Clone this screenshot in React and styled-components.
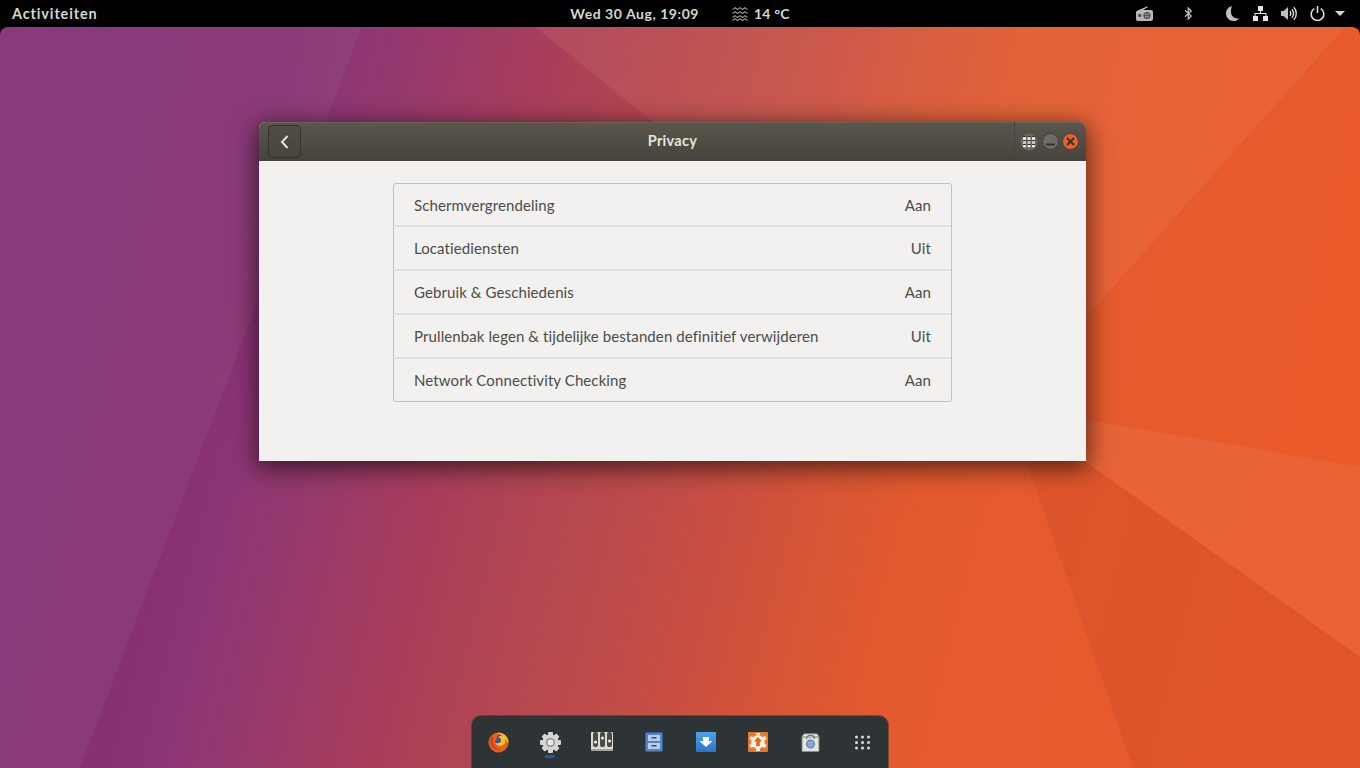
import styled, { createGlobalStyle } from 'styled-components';

const GlobalStyle = createGlobalStyle`
  html, body { margin: 0; padding: 0; height: 100%; background: #000; }
  #root { height: 100%; }
`;

const Screen = styled.div`
  width: 1360px;
  height: 768px;
  overflow: hidden;
  display: flex;
  flex-direction: column;
  background: #000;
  font-family: Lato, "Noto Sans", sans-serif;
`;

const TopBar = styled.header`
  height: 27px;
  flex: none;
  display: grid;
  grid-template-columns: 1fr auto 1fr;
  align-items: center;
  color: #d3d7cf;
  font-size: 14px;
  font-weight: 700;
  letter-spacing: 0.55px;
`;

const ActivitiesLabel = styled.span`
  margin-left: 12px;
  font-size: 14.5px;
  letter-spacing: 0.85px;
`;

const Clock = styled.div`
  display: flex;
  align-items: center;
`;

const Weather = styled.span`
  display: flex;
  align-items: center;
  gap: 6px;
  margin-left: 33px;
  letter-spacing: 0.2px;
`;

const Tray = styled.div`
  display: flex;
  align-items: center;
  justify-content: flex-end;
  padding-right: 15px;
`;

const TraySlot = styled.span`
  display: flex;
  margin-left: ${p => p.$gap}px;
`;

const Desktop = styled.main`
  position: relative;
  flex: 1;
  border-radius: 8px 8px 0 0;
  overflow: hidden;
`;

const Wallpaper = styled.svg`
  position: absolute;
  inset: 0;
  display: block;
`;

const Window = styled.section`
  position: absolute;
  left: 259px;
  top: 95px;
  width: 827px;
  height: 339px;
  display: flex;
  flex-direction: column;
  background: #f2f1ef;
  border-radius: 7px 7px 0 0;
  box-shadow: 0 5px 24px 2px rgba(0, 0, 0, 0.62);
`;

const HeaderBar = styled.div`
  height: 39px;
  flex: none;
  display: grid;
  grid-template-columns: 1fr auto 1fr;
  align-items: center;
  padding: 0 7px 0 9px;
  border-radius: 7px 7px 0 0;
  background: linear-gradient(#5b574c, #45433c);
  box-shadow: inset 0 1px 0 #66635a;
`;

const BackButton = styled.button`
  width: 33px;
  height: 33px;
  padding: 0;
  display: flex;
  align-items: center;
  justify-content: center;
  justify-self: start;
  background: linear-gradient(#504d45, #47453e);
  border: 1px solid #34332e;
  border-radius: 4px;
`;

const Title = styled.h1`
  margin: 0 0 2px -2px;
  color: #e6e4df;
  font-size: 14.5px;
  font-weight: 700;
  letter-spacing: 0.3px;
`;

const WindowControls = styled.div`
  display: flex;
  align-items: center;
  justify-content: flex-end;
  height: 39px;
`;

const Divider = styled.span`
  width: 1px;
  height: 39px;
  background: #45433c;
  margin-right: 5px;
`;

const ControlSlot = styled.span`
  display: flex;
  margin-left: ${p => p.$gap || 0}px;
`;

const WindowBody = styled.div`
  flex: 1;
  padding: 22px 134px 0;
`;

const SettingsList = styled.ul`
  margin: 0;
  padding: 0;
  list-style: none;
  border: 1px solid #c4c2bd;
  border-radius: 3px;
`;

const SettingRow = styled.li`
  height: 42px;
  display: flex;
  align-items: center;
  justify-content: space-between;
  padding: 0 20px;
  color: #4c4c49;
  font-size: 15px;
  letter-spacing: 0.1px;
  & + & {
    border-top: 2px solid #e2e0dc;
  }
  &:first-child {
    height: 41px;
  }
`;

const Dock = styled.nav`
  position: absolute;
  left: 472px;
  bottom: 0;
  width: 416px;
  height: 52px;
  box-sizing: border-box;
  display: flex;
  align-items: flex-start;
  padding-top: 16px;
  background: #2e3336;
  border-radius: 9px 9px 0 0;
  box-shadow: 0 0 0 1px rgba(60, 50, 50, 0.55);
`;

const DockItem = styled.div`
  position: relative;
  width: 52px;
  height: 20px;
  flex: none;
  display: flex;
  align-items: center;
  justify-content: center;
  &::after {
    content: '';
    display: ${p => (p.$running ? 'block' : 'none')};
    position: absolute;
    left: 21px;
    top: 23px;
    width: 10px;
    height: 3px;
    background: #245a9c;
  }
`;

const WallpaperArt = () => (
  <Wallpaper width="1360" height="741" viewBox="0 27 1360 741">
    <defs>
      <linearGradient id="base" x1="0" y1="600" x2="1280" y2="920" gradientUnits="userSpaceOnUse">
        <stop offset="0" stopColor="#86307a" />
        <stop offset="0.11" stopColor="#883073" />
        <stop offset="0.147" stopColor="#8c3575" />
        <stop offset="0.22" stopColor="#983a6a" />
        <stop offset="0.294" stopColor="#a83d5c" />
        <stop offset="0.368" stopColor="#b04552" />
        <stop offset="0.441" stopColor="#bb4a4b" />
        <stop offset="0.515" stopColor="#c94f42" />
        <stop offset="0.588" stopColor="#d75535" />
        <stop offset="0.662" stopColor="#e25a2e" />
        <stop offset="0.735" stopColor="#e65a2e" />
        <stop offset="1" stopColor="#ec5a28" />
      </linearGradient>
    </defs>
    <rect x="0" y="27" width="1360" height="741" fill="url(#base)" />
    <polygon points="0,27 362,27 80,768 0,768" fill="#9a6a8a" opacity="0.18" />
    <polygon points="535,27 1345,27 1007,406" fill="#f0a080" opacity="0.13" />
    <polygon points="1007,406 1360,467 1360,657" fill="#e8805a" opacity="0.25" />
    <polygon points="1007,406 1360,657 1360,768 1133,768" fill="#c84a28" opacity="0.3" />
  </Wallpaper>
);

const RadioIcon = () => (
  <svg width="17" height="15" viewBox="0 0 17 15">
    <path d="M1.500 4.500 11.500.3l.4.9L7 4h8a2 2 0 0 1 2 2v7a2 2 0 0 1-2 2H2a2 2 0 0 1-2-2V6.500a2 2 0 0 1 1.500-2z" fill="#b8b8b8" />
    <circle cx="11" cy="9.500" r="3.600" fill="#505050" />
    <g fill="#c8c8c8">
      <circle cx="9.800" cy="8.300" r=".7" />
      <circle cx="12.200" cy="8.300" r=".7" />
      <circle cx="9.800" cy="10.700" r=".7" />
      <circle cx="12.200" cy="10.700" r=".7" />
    </g>
    <circle cx="3.800" cy="9.500" r="1.700" fill="#505050" />
  </svg>
);

const BluetoothIcon = () => (
  <svg width="9" height="15" viewBox="0 0 9 15">
    <path d="M1 4.200 7.200 10 4.300 13V2l2.900 3L1 10.800" fill="none" stroke="#bebebe" strokeWidth="1.300" />
  </svg>
);

const MoonIcon = () => (
  <svg width="13" height="15" viewBox="0 0 13 15">
    <path d="M6 0C2.500.8 0 3.900 0 7.500 0 11.600 3.300 15 7.500 15c2.300 0 4.300-1 5.500-2.600-.5.100-1 .1-1.500.1C7.900 12.500 5 9.600 5 6 5 3.700 5.200 1.600 6 0z" fill="#bebebe" />
  </svg>
);

const NetworkIcon = () => (
  <svg width="15" height="15" viewBox="0 0 15 15" fill="#e6e6e6">
    <rect x="5" y="0" width="5" height="5" />
    <rect x="0" y="10" width="5" height="5" />
    <rect x="10" y="10" width="5" height="5" />
    <path d="M7 5h1v2h5.500v3h-1V8h-10v2h-1V7H7z" />
  </svg>
);

const VolumeIcon = () => (
  <svg width="16" height="15" viewBox="0 0 16 15">
    <path d="M0 5h2.500L7 1v13l-4.500-4H0z" fill="#bebebe" />
    <path d="M8.800 5.200a3.200 3.200 0 0 1 0 4.600M10.700 3.200a6 6 0 0 1 0 8.600M12.700 1.300a8.700 8.700 0 0 1 0 12.400" fill="none" stroke="#dcdcdc" strokeWidth="1.400" />
  </svg>
);

const PowerIcon = () => (
  <svg width="15" height="15" viewBox="0 0 15 15" fill="none" stroke="#e6e6e6" strokeWidth="1.500">
    <path d="M4.300 2.700a6.300 6.300 0 1 0 6.400 0" />
    <path d="M7.500 0v7" />
  </svg>
);

const CaretIcon = () => (
  <svg width="10" height="5" viewBox="0 0 10 5">
    <path d="M0 0h10L5 5z" fill="#d6d6d6" />
  </svg>
);

const WeatherIcon = () => (
  <svg width="16" height="14" viewBox="0 0 16 14" fill="none" stroke="#8f8f8c" strokeWidth="1.200">
    <path d="M.5 2.500 3 .8l2.500 1.700L8 .8l2.500 1.700L13 .8l2.500 1.700" />
    <path d="M.5 6.500 3 4.800l2.500 1.700L8 4.800l2.500 1.700L13 4.800l2.500 1.700" />
    <path d="M.5 10.500 3 8.800l2.500 1.700L8 8.800l2.500 1.700L13 8.800l2.500 1.700" />
    <path d="M.5 13.500 3 11.800l2.500 1.700L8 11.800l2.500 1.700L13 11.800l2.500 1.700" />
  </svg>
);

const BackChevron = () => (
  <svg width="9" height="14" viewBox="0 0 9 14">
    <path d="M7.500 1 2 7l5.500 6" fill="none" stroke="#e4e2de" strokeWidth="2" />
  </svg>
);

const TweakButton = () => (
  <svg width="18" height="18" viewBox="0 0 18 18">
    <circle cx="9" cy="9" r="8.500" fill="#6a6860" />
    {[3, 7.500, 12].map(x => (
      <g key={x}>
        <rect x={x} y="3" width="3" height="12" fill="#34332e" />
        <rect x={x} y="4" width="3" height="3" fill="#e6e6e2" />
        <rect x={x} y="8" width="3" height="3" fill="#c8c8c4" />
        <rect x={x} y="12" width="3" height="2.500" fill="#e6e6e2" />
      </g>
    ))}
  </svg>
);

const MinimizeButton = () => (
  <svg width="17" height="17" viewBox="0 0 17 17">
    <circle cx="8.500" cy="8.500" r="8" fill="#6f6d66" stroke="#3f3d37" />
    <rect x="4" y="10.500" width="9" height="2" fill="#34332e" />
  </svg>
);

const CloseButton = () => (
  <svg width="17" height="17" viewBox="0 0 17 17">
    <circle cx="8.500" cy="8.500" r="8" fill="#ed5f30" stroke="#3f3d37" />
    <path d="M5 5l7 7M12 5l-7 7" stroke="#3c3526" strokeWidth="2.200" />
  </svg>
);

const FirefoxIcon = () => (
  <svg width="21" height="21" viewBox="0 0 22 22">
    <circle cx="11" cy="11" r="10.500" fill="#e8601a" />
    <path d="M21.500 11A10.500 10.500 0 0 0 7 1.500c3-.5 6 .5 8 3-2-1-3.500-.5-4.500 1 2 .5 3.500 2 3 4-1 2.500-4 3-6 1.500 1 3 4.500 4.500 7.500 3 3-1.500 4-4 3-7 1.500 1.500 2 3 2.500 4.500z" fill="#f5c020" />
    <path d="M15 4.500c-2-1-3.500-.5-4.500 1 2 .5 3.500 2 3 4-1 2.500-4 3-6 1.500-.5-2 .5-3 2-3.500-1-1.500-.5-3 1-4 1.500-1 3.500-.5 4.500 1z" fill="#2a5aa8" />
    <path d="M3 6c-1.500 3-1 7 1.500 10 3 3 7.500 3.500 11 1.500-4 1-8-.5-9.500-4-1-2.500-1-5 0-7L5 3.500z" fill="#d8401a" />
  </svg>
);

const GearIcon = () => (
  <svg width="21" height="21" viewBox="0 0 21 21">
    <g fill="#d6d6d4">
      <circle cx="10.500" cy="10.500" r="8" />
      {[0, 45, 90, 135, 180, 225, 270, 315].map(a => (
        <rect key={a} x="8" y="0" width="5" height="4" rx="1" transform={`rotate(${a} 10.500 10.500)`} />
      ))}
    </g>
    <circle cx="10.500" cy="10.500" r="4.500" fill="#8e8e8c" />
    <circle cx="10.500" cy="10.500" r="3" fill="#ecebe9" />
  </svg>
);

const TweakToolIcon = () => (
  <svg width="22" height="20" viewBox="0 0 22 20">
    <rect x="0" y="0" width="22" height="19" rx="1" fill="#dcdcd6" />
    <rect x="0" y="17" width="22" height="2" fill="#a4a49e" />
    {[[2, 10], [9, 6], [16, 9]].map(([x, y]) => (
      <g key={x}>
        <rect x={x} y="0" width="5" height="15" rx="2" fill="#4a4a48" />
        <circle cx={x + 2.500} cy={y} r="1.600" fill="#ecece8" />
      </g>
    ))}
  </svg>
);

const FilesIcon = () => (
  <svg width="18" height="20" viewBox="0 0 18 20">
    <rect x="0.500" y="0.500" width="17" height="19" rx="1.500" fill="#4f86c8" stroke="#2f5f9e" />
    <rect x="3" y="3" width="12" height="6" fill="#b9cde4" />
    <rect x="3" y="11" width="12" height="6" fill="#b9cde4" />
    <rect x="6.500" y="5" width="5" height="1.500" fill="#2f4f78" />
    <rect x="6.500" y="13" width="5" height="1.500" fill="#2f4f78" />
  </svg>
);

const DownloadsIcon = () => (
  <svg width="20" height="20" viewBox="0 0 20 20">
    <defs>
      <linearGradient id="dl" x1="0" y1="0" x2="0" y2="1">
        <stop offset="0" stopColor="#4aa4ec" />
        <stop offset="1" stopColor="#2a74cc" />
      </linearGradient>
    </defs>
    <rect width="20" height="20" rx="1" fill="url(#dl)" />
    <path d="M7 5h6v4h3.500L10 15 3.500 9H7z" fill="#fff" />
  </svg>
);

const UpdatesIcon = () => (
  <svg width="20" height="20" viewBox="0 0 20 20">
    <rect width="20" height="20" rx="1" fill="#e8792c" />
    <g fill="#fbeee2">
      <circle cx="10" cy="10" r="6.800" />
      {[0, 60, 120, 180, 240, 300].map(a => (
        <rect key={a} x="8.200" y="1" width="3.600" height="4" transform={`rotate(${a} 10 10)`} />
      ))}
    </g>
    <path d="M10 5l4 4.500h-2.200V14H8.200V9.500H6z" fill="#e0691e" />
  </svg>
);

const StoreIcon = () => (
  <svg width="19" height="19" viewBox="0 0 19 19">
    <path d="M1 3.500 3 .8h13l2 2.700v14.200a1 1 0 0 1-1 1H2a1 1 0 0 1-1-1z" fill="#e4e4e0" stroke="#82847e" />
    <path d="M1 4h17" stroke="#82847e" />
    <path d="M5.500 6c0-5 8-5 8 0" fill="none" stroke="#6c6e68" strokeWidth="1.200" />
    <circle cx="9.500" cy="11" r="4.700" fill="#6f95cc" />
    <g fill="#e6ecf5">
      <circle cx="8.200" cy="9.800" r=".7" />
      <circle cx="10.800" cy="9.800" r=".7" />
      <circle cx="8.200" cy="12.300" r=".7" />
      <circle cx="10.800" cy="12.300" r=".7" />
    </g>
  </svg>
);

const AppGridIcon = () => (
  <svg width="15" height="15" viewBox="0 0 15 15" fill="#d8dcdc">
    {[1.500, 7.500, 13.500].flatMap(x =>
      [2, 7.500, 13].map(y => <circle key={`${x}-${y}`} cx={x} cy={y} r="1.500" />)
    )}
  </svg>
);

const settings = [
  ['Schermvergrendeling', 'Aan'],
  ['Locatiediensten', 'Uit'],
  ['Gebruik & Geschiedenis', 'Aan'],
  ['Prullenbak legen & tijdelijke bestanden definitief verwijderen', 'Uit'],
  ['Network Connectivity Checking', 'Aan'],
];

const dockApps = [
  { id: 'firefox', Icon: FirefoxIcon },
  { id: 'settings', Icon: GearIcon, running: true },
  { id: 'tweaks', Icon: TweakToolIcon },
  { id: 'files', Icon: FilesIcon },
  { id: 'downloads', Icon: DownloadsIcon },
  { id: 'updates', Icon: UpdatesIcon },
  { id: 'store', Icon: StoreIcon },
  { id: 'grid', Icon: AppGridIcon },
];

const trayIcons = [
  { id: 'radio', Icon: RadioIcon, gap: 0 },
  { id: 'bluetooth', Icon: BluetoothIcon, gap: 31 },
  { id: 'moon', Icon: MoonIcon, gap: 33 },
  { id: 'network', Icon: NetworkIcon, gap: 14 },
  { id: 'volume', Icon: VolumeIcon, gap: 13 },
  { id: 'power', Icon: PowerIcon, gap: 13 },
  { id: 'caret', Icon: CaretIcon, gap: 10 },
];

function App() {
  return (
    <Screen>
      <GlobalStyle />
      <TopBar>
        <ActivitiesLabel>Activiteiten</ActivitiesLabel>
        <Clock>
          <span>Wed 30 Aug, 19:09</span>
          <Weather>
            <WeatherIcon />
            14 °C
          </Weather>
        </Clock>
        <Tray>
          {trayIcons.map(({ id, Icon, gap }) => (
            <TraySlot key={id} $gap={gap}>
              <Icon />
            </TraySlot>
          ))}
        </Tray>
      </TopBar>
      <Desktop>
        <WallpaperArt />
        <Window>
          <HeaderBar>
            <BackButton aria-label="Terug">
              <BackChevron />
            </BackButton>
            <Title>Privacy</Title>
            <WindowControls>
              <Divider />
              <ControlSlot><TweakButton /></ControlSlot>
              <ControlSlot $gap={4}><MinimizeButton /></ControlSlot>
              <ControlSlot $gap={3}><CloseButton /></ControlSlot>
            </WindowControls>
          </HeaderBar>
          <WindowBody>
            <SettingsList>
              {settings.map(([label, value]) => (
                <SettingRow key={label}>
                  <span>{label}</span>
                  <span>{value}</span>
                </SettingRow>
              ))}
            </SettingsList>
          </WindowBody>
        </Window>
        <Dock>
          {dockApps.map(({ id, Icon, running }) => (
            <DockItem key={id} $running={running}>
              <Icon />
            </DockItem>
          ))}
        </Dock>
      </Desktop>
    </Screen>
  );
}

export default App;
